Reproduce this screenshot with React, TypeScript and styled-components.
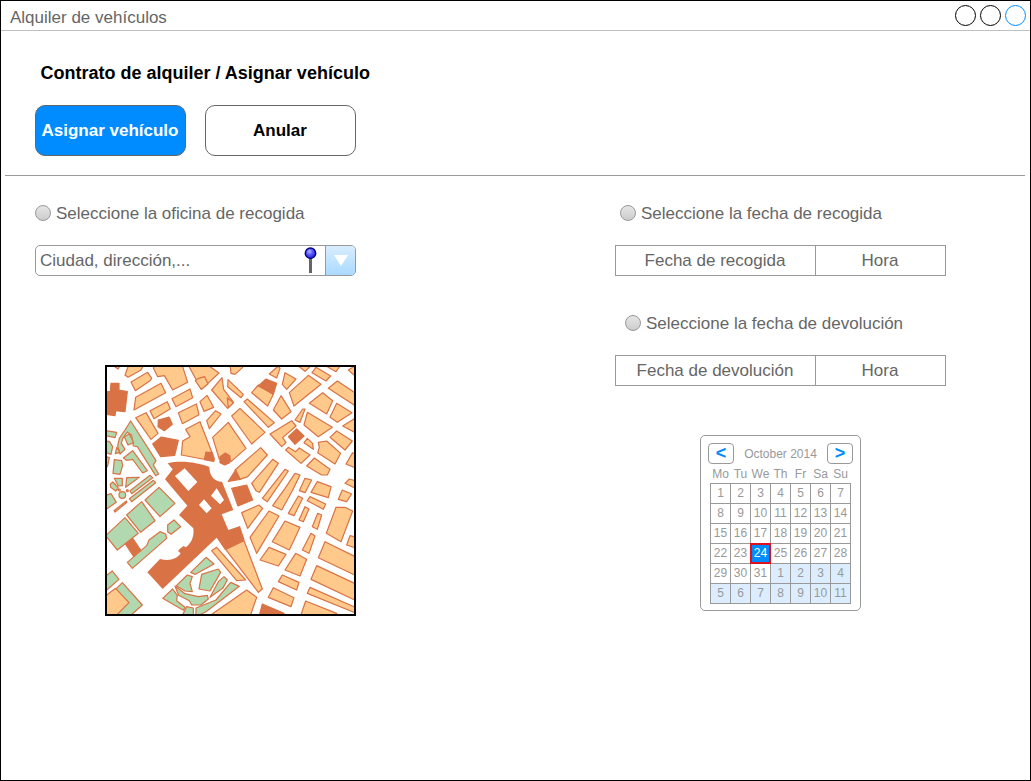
import React from 'react';
import styled, { createGlobalStyle } from 'styled-components';

const GlobalStyle = createGlobalStyle`
  * { box-sizing: border-box; }
  body { margin: 0; background: #fff; }
  button { font: inherit; padding: 0; margin: 0; }
`;

const Window = styled.div`
  width: 1031px;
  height: 781px;
  border: 1px solid #000;
  background: #fff;
  font-family: 'Liberation Sans', Arial, sans-serif;
  font-size: 17px;
  color: #666;
  overflow: hidden;
`;

const TitleBar = styled.header`
  height: 30px;
  border-bottom: 1px solid #c0c0c0;
  display: flex;
  justify-content: space-between;
  padding: 3px 4px 0 9px;
`;

const Title = styled.span`
  line-height: 20px;
  padding-top: 4px;
`;

const Controls = styled.div`
  display: flex;
  gap: 4px;
`;

const Circle = styled.span<{ $color: string }>`
  width: 21px;
  height: 21px;
  margin-top: 1px;
  border: 1px solid ${(p) => p.$color};
  border-radius: 50%;
`;

const Head = styled.section`
  margin: 0 5px 0 4px;
  height: 145px;
  border-bottom: 1px solid #999;
  padding: 32px 30px 0;
`;

const Heading = styled.h1`
  margin: 0 0 21px 5.5px;
  font-size: 18px;
  line-height: 21px;
  color: #000;
`;

const Actions = styled.div`
  display: flex;
  gap: 19px;
`;

const Button = styled.button<{ $primary?: boolean }>`
  width: 151px;
  height: 51px;
  padding-right: 1px;
  border: 1px solid #666;
  border-radius: 10px;
  background: ${(p) => (p.$primary ? '#008cff' : '#fff')};
  color: ${(p) => (p.$primary ? '#fff' : '#000')};
  font-weight: bold;
  white-space: nowrap;
`;

const Columns = styled.main`
  display: flex;
  padding: 27px 0 0 34px;
`;

const Left = styled.div`
  width: 580px;
`;

const Right = styled.div`
  width: 331px;
`;

const RadioLabel = styled.label<{ $indent?: number }>`
  display: flex;
  align-items: center;
  gap: 5px;
  height: 20px;
  line-height: 20px;
  margin-left: ${(p) => p.$indent ?? 0}px;
`;

const RadioText = styled.span`
  padding-top: 1px;
`;

const Radio = styled.span`
  width: 16px;
  height: 16px;
  border: 1px solid #999;
  border-radius: 50%;
  background: linear-gradient(#e6e6e6, #cccccc);
`;

const Combo = styled.div`
  margin-top: 22px;
  width: 321px;
  height: 31px;
  border: 1px solid #999;
  border-radius: 5px;
  display: flex;
  overflow: hidden;
`;

const ComboText = styled.span`
  flex: 1;
  padding-left: 4px;
  line-height: 29px;
`;

const Pin = styled.svg`
  width: 16px;
  height: 29px;
  margin-right: 7px;
`;

const DropButton = styled.span`
  width: 30px;
  border-left: 1px solid #999;
  background: linear-gradient(#d8edff, #aadaff);
  display: flex;
  align-items: center;
  justify-content: center;
`;

const Map = styled.svg`
  display: block;
  width: 251px;
  height: 251px;
  margin: 89px 0 0 70px;
`;

const DateRow = styled.div<{ $gap: number }>`
  display: grid;
  grid-template-columns: 200px 131px;
  height: 31px;
  margin-top: 22px;
  margin-bottom: ${(p) => p.$gap}px;
`;

const DateCell = styled.div<{ $last?: boolean }>`
  border: 1px solid #999;
  border-right-width: ${(p) => (p.$last ? 1 : 0)}px;
  padding-right: 1px;
  line-height: 29px;
  text-align: center;
`;

const Calendar = styled.div`
  width: 161px;
  height: 176px;
  margin-left: 85px;
  border: 1px solid #999;
  border-radius: 5px;
  padding: 7px 7px 0;
  font-size: 12px;
  color: #999;
`;

const MonthBar = styled.div`
  display: flex;
  justify-content: space-between;
  align-items: center;
  height: 21px;
`;

const Arrow = styled.button`
  width: 26px;
  height: 21px;
  border: 1px solid #999;
  border-radius: 4px;
  background: #fff;
  color: #008cff;
  font: bold 18px/19px 'Liberation Sans', Arial, sans-serif;
`;

const WeekDays = styled.div`
  display: grid;
  grid-template-columns: repeat(7, 20px);
  margin-left: 2.5px;
  height: 19px;
  line-height: 20px;
  text-align: center;
`;

const Days = styled.div`
  display: grid;
  grid-template-columns: repeat(7, 20px);
  grid-auto-rows: 20px;
  width: 141px;
  margin-left: 2px;
  border-top: 1px solid #999;
  border-left: 1px solid #999;
`;

const Day = styled.span<{ $kind: 'normal' | 'other' | 'selected' }>`
  border-right: 1px solid #999;
  border-bottom: 1px solid #999;
  line-height: 19px;
  text-align: center;
  background: ${(p) => (p.$kind === 'other' ? '#dbedff' : '#fff')};
  ${(p) =>
    p.$kind === 'selected' &&
    `
    margin: -1px 0 0 -1px;
    border: 2px solid #e0101c;
    background: #008cff;
    color: #fff;
    line-height: 17px;
    position: relative;
    width: 21px;
    height: 21px;
  `}
`;

const ORANGE = '#ffc98b';
const GREEN = '#b1d8ae';
const BROWN = '#d97345';

type Block = [string, string];

const northWest: Block[] = [
  [ORANGE, '75,45 84,52 122,31 130,18 85,18'],
  [ORANGE, '36,14 54,27 62,14'],
  [ORANGE, '93,66 143,37 155,55 150,62 106,92'],
  [ORANGE, '107,112 183,70 197,98 102,150'],
  [ORANGE, '150,152 202,125 211,146 162,176'],
  [ORANGE, '107,173 138,158 174,220 153,238'],
  [ORANGE, '160,24 166,14 246,14 263,67 218,90 193,47 173,50'],
  [ORANGE, '264,14 322,14 357,39 304,88'],
  [ORANGE, '286,62 296,55 314,50 324,72 304,88'],
  [ORANGE, '216,116 270,87 278,113 228,140'],
  [ORANGE, '235,158 289,132 297,164 247,191'],
  [ORANGE, '300,125 321,106 341,142 312,154'],
  [ORANGE, '320,182 347,152 363,162 328,206'],
  [ORANGE, '257,208 300,185 343,296 340,303 244,285 248,243 270,230'],
  [BROWN, '318,276 337,278 342,304 313,299'],
  [ORANGE, '335,90 366,53 371,88 401,128 383,145'],
  [ORANGE, '384,59 430,103 423,113 383,80'],
  [ORANGE, '338,232 385,187 438,265 393,305 385,285 358,298'],
  [BROWN, '360,290 376,279 390,288 389,308 374,315 360,308'],
  [BROWN, '33,70 57,70 57,90 82,95 75,155 47,152 45,167 19,163 19,95 31,95'],
  [BROWN, '175,180 207,171 217,193 193,212 174,200'],
  [BROWN, '184,231 235,241 224,286 182,290 158,252'],
  [GREEN, '58,235 75,210 92,183 168,302 160,315 176,342 167,347 112,260 100,258 95,226 82,216 68,236 64,250 75,268 60,282 53,258'],
  [GREEN, '73,230 88,222 101,248 84,255'],
  [GREEN, '17,212 50,217 45,233 17,227'],
  [GREEN, '17,243 28,244 38,260 33,283 17,277'],
  [GREEN, '46,281 50,262 60,277'],
  [GREEN, '17,290 28,293 23,318 17,325'],
  [GREEN, '43,299 65,302 68,316 60,343 39,340'],
  [GREEN, '70,294 98,272 142,332 128,339 98,298 80,301'],
  [GREEN, '43,355 67,355 67,377 55,378'],
  [GREEN, '31,372 39,366 55,384 47,393 32,382'],
  [GREEN, '80,353 118,352 77,382'],
  [GREEN, '90,392 150,346 158,353 95,401'],
  [GREEN, '88,416 160,361 167,368 95,425'],
  [GREEN, '17,406 33,401 49,427 17,449'],
  [GREEN, '42,452 79,423 81,427 45,456'],
];

const northEast: Block[] = [
  [ORANGE, '3,40 15,43 38,22 38,14 0,14'],
  [ORANGE, '-8,113 10,128 -5,143'],
  [ORANGE, '118,42 145,18 150,25 140,54'],
  [ORANGE, '165,38 198,57 170,88 157,73'],
  [ORANGE, '205,18 242,18 225,34'],
  [ORANGE, '258,22 302,48 288,63 246,38'],
  [ORANGE, '288,18 330,18 318,35'],
  [ORANGE, '355,30 380,14 380,52'],
  [ORANGE, '65,98 85,75 130,103 113,138'],
  [BROWN, '85,78 108,57 140,70 130,103'],
  [ORANGE, '178,98 235,46 273,73 192,138'],
  [ORANGE, '295,85 322,63 380,102 380,140'],
  [ORANGE, '238,130 278,98 308,122 290,162'],
  [ORANGE, '300,172 320,130 366,158 322,187'],
  [ORANGE, '338,198 380,172 380,220'],
  [ORANGE, '42,125 52,117 133,188 115,202'],
  [ORANGE, '5,168 30,145 105,217 65,252'],
  [ORANGE, '130,150 153,107 183,155 155,177'],
  [ORANGE, '120,222 185,182 198,198 158,233 168,248 155,260'],
  [BROWN, '175,230 200,207 222,228 195,253'],
  [ORANGE, '195,180 218,147 225,147 210,187'],
  [ORANGE, '222,195 232,157 307,202 265,230'],
  [ORANGE, '222,248 232,235 248,250 250,268'],
  [ORANGE, '167,270 175,262 197,275 208,264 240,285 213,310'],
  [ORANGE, '265,247 290,243 332,280 315,312 263,278 268,262'],
  [ORANGE, '300,232 320,213 367,243 345,270'],
  [ORANGE, '348,312 368,278 380,284 380,325'],
  [ORANGE, '230,318 253,294 300,328 292,345 275,345'],
  [ORANGE, '345,370 358,357 380,363 380,387'],
  [ORANGE, '15,330 92,263 112,285 53,350 30,358'],
  [BROWN, '-5,364 17,330 30,358'],
  [BROWN, '5,385 50,375 68,420 24,438'],
  [ORANGE, '65,370 128,298 145,310 88,397 78,392'],
  [ORANGE, '97,415 165,328 175,333 112,425'],
  [ORANGE, '195,340 210,345 187,392 155,450 128,437 165,385'],
  [ORANGE, '225,355 245,360 225,398 208,392'],
  [ORANGE, '262,365 303,380 295,413 243,397'],
];

const southWest: Block[] = [
  [BROWN, '77,163 98,145 125,185 103,202'],
  [GREEN, '80,75 125,35 165,92 122,127'],
  [GREEN, '135,30 177,-8 225,40 180,80'],
  [GREEN, '17,137 75,83 115,130 52,180'],
  [GREEN, '82,217 140,167 147,150 180,125 197,132 200,145 97,235'],
  [GREEN, '203,105 222,90 242,110 213,133 203,125'],
  [GREEN, '17,258 37,243 57,268 17,303'],
  [GREEN, '45,300 67,278 127,345 88,380 40,380'],
  [ORANGE, '17,317 47,295 87,338 45,380 17,380'],
  [ORANGE, '335,182 350,172 437,270 410,272'],
  [GREEN, '272,247 318,202 342,222 286,253'],
  [GREEN, '305,253 355,237 362,247 330,303 297,297'],
  [GREEN, '229,287 262,255 277,260 270,280 277,305 255,303'],
  [GREEN, '330,322 355,275 372,260 382,270 368,295'],
  [GREEN, '225,288 255,311 295,320 322,316 325,327 303,345 275,345 268,332 236,316'],
  [GREEN, '188,325 218,297 232,316 230,332 255,352 250,361'],
  [GREEN, '245,380 260,350 280,354 280,380'],
  [GREEN, '288,354 348,330 392,277 418,289 318,365 288,380'],
  [ORANGE, '325,380 440,300 470,322 450,380'],
];

const southEast: Block[] = [
  [ORANGE, '-13,178 42,152 97,297 85,307'],
  [BROWN, '87,380 97,342 162,370 162,380'],
  [ORANGE, '325,28 337,0 365,12 350,35'],
  [ORANGE, '175,70 205,18 218,25 192,77'],
  [ORANGE, '232,32 240,20 287,42 280,58'],
  [ORANGE, '207,90 225,50 237,57 220,95'],
  [ORANGE, '247,110 263,70 275,75 262,118'],
  [ORANGE, '289,130 318,52 345,52 368,63 333,155'],
  [ORANGE, '350,165 360,137 380,142 380,175'],
  [ORANGE, '35,68 87,45 98,55 53,115'],
  [ORANGE, '60,142 117,63 147,78 80,190'],
  [ORANGE, '127,155 165,93 210,112 178,180'],
  [ORANGE, '217,180 243,130 255,138 237,190'],
  [ORANGE, '90,210 117,172 168,193 145,228'],
  [ORANGE, '165,240 197,190 230,208 210,258'],
  [ORANGE, '265,203 285,155 380,202 380,258'],
  [ORANGE, '243,268 260,227 380,283 380,333'],
  [ORANGE, '145,275 157,255 207,277 200,300'],
  [ORANGE, '115,322 130,293 192,323 183,350'],
  [ORANGE, '232,310 240,292 380,354 380,370'],
  [ORANGE, '211,380 227,333 320,370 320,380'],
];

const Blocks = ({ blocks, x, y }: { blocks: Block[]; x: number; y: number }) => (
  <g transform={`translate(${x} ${y})`}>
    {blocks.map(([fill, points], i) => (
      <polygon key={i} points={points} fill={fill} />
    ))}
  </g>
);

const CityMap = () => (
  <Map viewBox="15 15 753 753">
    <g stroke={BROWN} strokeWidth="3.6" strokeLinejoin="round">
      <Blocks blocks={northWest} x={0} y={0} />
      <Blocks blocks={northEast} x={390} y={0} />
      <Blocks blocks={southWest} x={0} y={390} />
      <circle cx="67" cy="405" r="10" fill={GREEN} />
      <circle cx="58" cy="390" r="3" fill={GREEN} />
      <circle cx="82" cy="392" r="3" fill={GREEN} />
      <Blocks blocks={southEast} x={390} y={390} />
    </g>
    <path
      fill={BROWN}
      fillRule="evenodd"
      d="M203 310C245 300 292 308 328 321C328 346 342 365 366 365L400 450L365 463L385 510L420 498L434 540L375 570L350 533L188 687L142 637L180 597C205 603 228 600 242 580L234 573L240 566L250 558L258 562C278 545 282 528 280 505L237 465L262 437L195 358L218 328ZM225 348L254 325L292 366L265 393ZM333 407L350 385L372 420L360 433ZM297 435L312 418L335 445L320 460Z"
    />
    <rect x="18" y="18" width="747" height="747" fill="none" stroke="#000" strokeWidth="6" />
  </Map>
);

const weekDays = ['Mo', 'Tu', 'We', 'Th', 'Fr', 'Sa', 'Su'];
const days = Array.from({ length: 42 }, (_, i) => (i < 31 ? i + 1 : i - 30));

const dayKind = (i: number) => (i > 30 ? 'other' : i === 23 ? 'selected' : 'normal');

export default function App() {
  return (
    <>
      <GlobalStyle />
      <Window>
        <TitleBar>
          <Title>Alquiler de vehículos</Title>
          <Controls>
            <Circle $color="#000" />
            <Circle $color="#000" />
            <Circle $color="#008cff" />
          </Controls>
        </TitleBar>
        <Head>
          <Heading>Contrato de alquiler / Asignar vehículo</Heading>
          <Actions>
            <Button $primary>Asignar vehículo</Button>
            <Button>Anular</Button>
          </Actions>
        </Head>
        <Columns>
          <Left>
            <RadioLabel>
              <Radio />
              <RadioText>Seleccione la oficina de recogida</RadioText>
            </RadioLabel>
            <Combo>
              <ComboText>Ciudad, dirección,...</ComboText>
              <Pin viewBox="0 0 16 29">
                <defs>
                  <radialGradient id="pinHead" cx="0.4" cy="0.35" r="0.6">
                    <stop offset="0" stopColor="#b4b4ff" />
                    <stop offset="0.5" stopColor="#5a5aff" />
                    <stop offset="1" stopColor="#2828e0" />
                  </radialGradient>
                </defs>
                <rect x="7" y="12" width="3" height="15" fill="#666" />
                <circle cx="8.5" cy="7.2" r="5.2" fill="url(#pinHead)" stroke="#000080" strokeWidth="1.4" />
              </Pin>
              <DropButton>
                <svg width="14" height="11" viewBox="0 0 14 11">
                  <path d="M0 0H14L7 11Z" fill="#fff" />
                </svg>
              </DropButton>
            </Combo>
            <CityMap />
          </Left>
          <Right>
            <RadioLabel $indent={5}>
              <Radio />
              <RadioText>Seleccione la fecha de recogida</RadioText>
            </RadioLabel>
            <DateRow $gap={37}>
              <DateCell>Fecha de recogida</DateCell>
              <DateCell $last>Hora</DateCell>
            </DateRow>
            <RadioLabel $indent={10}>
              <Radio />
              <RadioText>Seleccione la fecha de devolución</RadioText>
            </RadioLabel>
            <DateRow $gap={49}>
              <DateCell>Fecha de devolución</DateCell>
              <DateCell $last>Hora</DateCell>
            </DateRow>
            <Calendar>
              <MonthBar>
                <Arrow>&lt;</Arrow>
                October 2014
                <Arrow>&gt;</Arrow>
              </MonthBar>
              <WeekDays>
                {weekDays.map((d) => (
                  <span key={d}>{d}</span>
                ))}
              </WeekDays>
              <Days>
                {days.map((d, i) => (
                  <Day key={i} $kind={dayKind(i)}>
                    {d}
                  </Day>
                ))}
              </Days>
            </Calendar>
          </Right>
        </Columns>
      </Window>
    </>
  );
}
